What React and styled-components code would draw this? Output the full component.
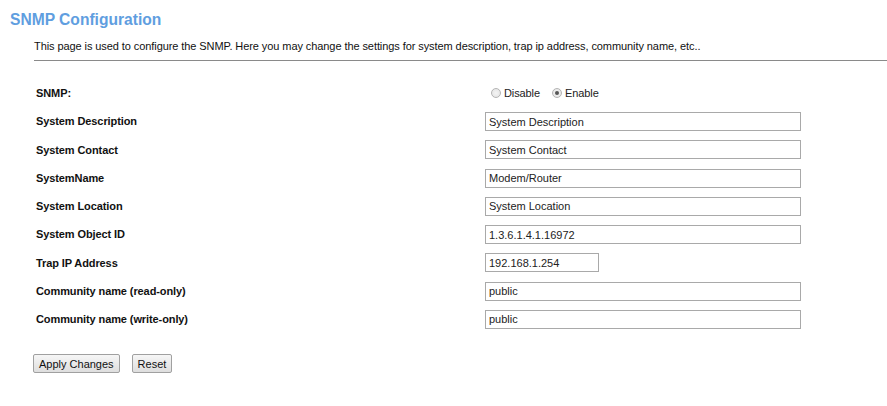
import React from "react";
import styled, { createGlobalStyle } from "styled-components";

const Global = createGlobalStyle`
  html, body { margin: 0; padding: 0; background: #fff; }
  body { font-family: "Liberation Sans", Arial, sans-serif; color: #000; }
`;

const Page = styled.div`
  padding: 10px 0 0 10px;
`;

const Title = styled.h1`
  margin: 0;
  font-size: 15.6px;
  font-weight: bold;
  color: #5f9ee0;
  line-height: 20px;
`;

const Intro = styled.div`
  margin: 9px 0 0 24px;
`;

const Desc = styled.p`
  margin: 0;
  font-size: 11px;
  line-height: 14px;
  letter-spacing: -0.08px;
  color: #111;
`;

const Rule = styled.hr`
  margin: 7px 0 0 0;
  border: 0;
  border-top: 1px solid #8a8a8a;
  height: 0;
`;

const Form = styled.div`
  margin: 18px 0 0 26px;
  display: grid;
  grid-template-columns: 449px 1fr;
  grid-auto-rows: 28.25px;
  align-items: center;
`;

const Label = styled.div`
  font-size: 11px;
  font-weight: bold;
  letter-spacing: -0.1px;
  color: #111;
`;

const Field = styled.input`
  box-sizing: border-box;
  width: ${(p) => p.$w}px;
  height: 19px;
  border: 1px solid #a9a9a9;
  padding: 0 3px;
  font-family: "Liberation Sans", Arial, sans-serif;
  font-size: 11px;
  color: #222;
  outline: none;
  margin: 0;
`;

const Radios = styled.div`
  display: flex;
  align-items: center;
  padding-left: 6px;
  font-size: 11px;
  letter-spacing: -0.1px;
  color: #222;
`;

const RadioLabel = styled.label`
  display: flex;
  align-items: center;
  margin-right: 12px;
`;

const Dot = styled.span`
  box-sizing: border-box;
  width: 10px;
  height: 10px;
  border-radius: 50%;
  border: 1px solid #b4b4b4;
  background: radial-gradient(circle, #f4f4f4 0%, #e2e2e2 100%);
  margin-right: 3px;
  position: relative;
  &::after {
    content: "";
    display: ${(p) => (p.$on ? "block" : "none")};
    position: absolute;
    left: 2px;
    top: 2px;
    width: 4px;
    height: 4px;
    border-radius: 50%;
    background: #555;
  }
`;

const Buttons = styled.div`
  margin: 21px 0 0 23px;
  display: flex;
  gap: 12px;
`;

const Btn = styled.button`
  box-sizing: border-box;
  height: 19px;
  padding: 0 5px;
  font-family: "Liberation Sans", Arial, sans-serif;
  font-size: 11px;
  color: #111;
  border: 1px solid #a0a0a0;
  border-radius: 2px;
  background: linear-gradient(#f6f6f6, #dedede);
`;

const rows = [
  ["System Description", "System Description", 316],
  ["System Contact", "System Contact", 316],
  ["SystemName", "Modem/Router", 316],
  ["System Location", "System Location", 316],
  ["System Object ID", "1.3.6.1.4.1.16972", 316],
  ["Trap IP Address", "192.168.1.254", 114],
  ["Community name (read-only)", "public", 316],
  ["Community name (write-only)", "public", 316],
];

export default function App() {
  return (
    <Page>
      <Global />
      <Title>SNMP Configuration</Title>
      <Intro>
        <Desc>
          This page is used to configure the SNMP. Here you may change the settings for system description, trap ip address, community name, etc..
        </Desc>
        <Rule />
      </Intro>
      <Form>
        <Label>SNMP:</Label>
        <Radios>
          <RadioLabel><Dot />Disable</RadioLabel>
          <RadioLabel><Dot $on />Enable</RadioLabel>
        </Radios>
        {rows.map(([l, v, w]) => (
          <React.Fragment key={l}>
            <Label>{l}</Label>
            <div><Field $w={w} defaultValue={v} /></div>
          </React.Fragment>
        ))}
      </Form>
      <Buttons>
        <Btn>Apply Changes</Btn>
        <Btn>Reset</Btn>
      </Buttons>
    </Page>
  );
}
